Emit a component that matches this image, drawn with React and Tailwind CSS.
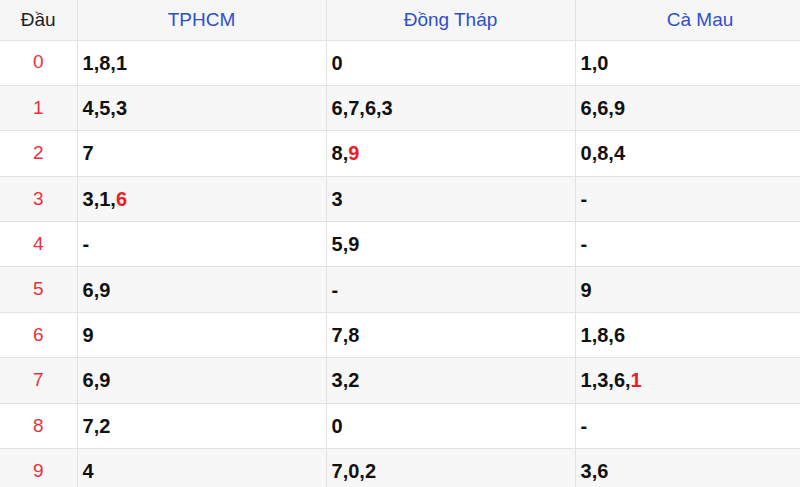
import React from "react";

const COLS = ["TPHCM", "Đồng Tháp", "Cà Mau"];

// "*" marks a digit shown in red
const ROWS = [
  ["1,8,1", "0", "1,0"],
  ["4,5,3", "6,7,6,3", "6,6,9"],
  ["7", "8,*9", "0,8,4"],
  ["3,1,*6", "3", "-"],
  ["-", "5,9", "-"],
  ["6,9", "-", "9"],
  ["9", "7,8", "1,8,6"],
  ["6,9", "3,2", "1,3,6,*1"],
  ["7,2", "0", "-"],
  ["4", "7,0,2", "3,6"],
];

const Cell = ({ value }) => {
  const parts = value.split(",");
  return (
    <>
      {parts.map((p, i) => (
        <React.Fragment key={i}>
          {i > 0 && ","}
          {p.startsWith("*") ? (
            <span className="text-[#ee1c25]">{p.slice(1)}</span>
          ) : (
            p
          )}
        </React.Fragment>
      ))}
    </>
  );
};

const App = () => {
  return (
    <div
      className="w-[800px] h-[487px] overflow-hidden bg-white"
      style={{ fontFamily: '"Liberation Sans", Arial, sans-serif' }}
    >
      <table className="w-[825px] table-fixed border-collapse">
        <colgroup>
          <col className="w-[77px]" />
          <col className="w-[249px]" />
          <col className="w-[249px]" />
          <col className="w-[250px]" />
        </colgroup>
        <thead>
          <tr className="h-[40px] bg-[#f6f6f6]">
            <th className="border border-[#e2e2e2] border-t-0 border-l-0 text-[19px] font-normal text-[#222]">
              Đầu
            </th>
            {COLS.map((c) => (
              <th
                key={c}
                className="border border-[#e2e2e2] border-t-0 text-[19px] font-normal text-[#2f4fc9]"
              >
                {c}
              </th>
            ))}
          </tr>
        </thead>
        <tbody>
          {ROWS.map((row, i) => (
            <tr
              key={i}
              className={i % 2 === 1 ? "h-[45.4px] bg-[#f7f7f7]" : "h-[45.4px] bg-white"}
            >
              <td className="border border-[#e2e2e2] border-l-0 text-center text-[19px] text-[#ec2f3b]">
                {i}
              </td>
              {row.map((v, j) => (
                <td
                  key={j}
                  className="border border-[#e2e2e2] pl-[5px] text-[20px] font-bold text-[#111]"
                >
                  <Cell value={v} />
                </td>
              ))}
            </tr>
          ))}
        </tbody>
      </table>
    </div>
  );
};

export default App;
